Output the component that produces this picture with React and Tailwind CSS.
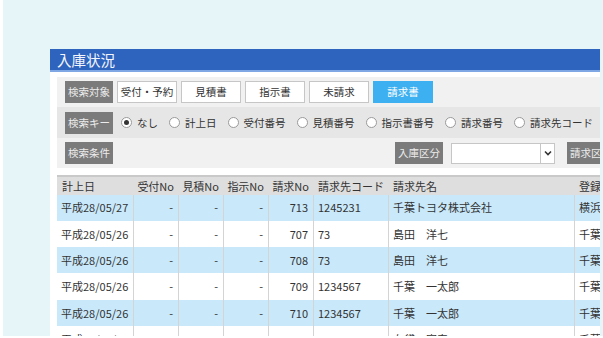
import React from "react";

const BUTTONS = ["受付・予約", "見積書", "指示書", "未請求", "請求書"];

const KEYS = ["なし", "計上日", "受付番号", "見積番号", "指示書番号", "請求番号", "請求先コード"];

const ROWS = [
  ["平成28/05/27", "713", "1245231", "千葉トヨタ株式会社", "横浜本店"],
  ["平成28/05/26", "707", "73", "島田　洋七", "千葉本店"],
  ["平成28/05/26", "708", "73", "島田　洋七", "千葉本店"],
  ["平成28/05/26", "709", "1234567", "千葉　一太郎", "千葉本店"],
  ["平成28/05/26", "710", "1234567", "千葉　一太郎", "千葉本店"],
  ["平成28/05/26", "711", "48", "布袋　寅泰", "千葉本店"],
];

const COLS = "grid grid-cols-[77px_45px_45px_45px_45px_75px_186px_90px]";

/* UI helpers */

const Label = ({ children }) => (
  <div className="h-[22px] w-[48px] shrink-0 bg-[#7b7b7b] text-[#ececec] text-[10.5px] flex items-center justify-center whitespace-nowrap">
    {children}
  </div>
);

const Radio = ({ label, checked }) => (
  <div className="flex items-center gap-[5px] mr-[11px] shrink-0">
    <span className="w-[11px] h-[11px] rounded-full border border-[#9a9a9a] bg-white flex items-center justify-center">
      {checked && <span className="w-[5px] h-[5px] rounded-full bg-[#333]" />}
    </span>
    <span className="text-[10.5px] text-[#333] whitespace-nowrap">{label}</span>
  </div>
);

const Cell = ({ children, right, border = true }) => (
  <div
    className={`h-[26.3px] flex items-center px-[4px] whitespace-nowrap overflow-hidden ${
      right ? "justify-end pr-[5px]" : ""
    } ${border ? "border-r border-[#d4d4d4]" : ""}`}
  >
    {children}
  </div>
);

export default function App() {
  return (
    <div className="w-[603px] h-[338px] bg-white overflow-hidden font-['Noto_Sans_CJK_JP',sans-serif]">
      <div className="ml-[3px] h-[336px] bg-[#e6f5f7] pt-[49px] pl-[47px] pr-[3px] overflow-hidden">
        <div className="w-[550px] h-full bg-white overflow-hidden">
          {/* ================= TITLE ================= */}
          <div className="h-[23px] bg-[#2e63be] border-b-2 border-[#7ea7e4] text-[#f4f6fb] text-[14.5px] pl-[7px] flex items-center">
            入庫状況
          </div>

          <div className="pl-[7px] pt-[5px] w-[600px]">
            {/* ================= SEARCH ================= */}
            <div className="bg-[#f1f1f1]">
              <div className="h-[30px] flex items-center pl-[8px]">
                <Label>検索対象</Label>
                <div className="flex gap-[4px] ml-[4px]">
                  {BUTTONS.map((b, i) => (
                    <div
                      key={b}
                      className={`h-[22px] w-[60px] flex items-center justify-center text-[10.5px] ${
                        i === 4
                          ? "bg-[#3db0f1] text-white border border-[#3db0f1]"
                          : "bg-white text-[#333] border border-[#c6c6c6]"
                      }`}
                    >
                      {b}
                    </div>
                  ))}
                </div>
              </div>

              <div className="h-[31px] flex items-center pl-[8px] bg-[#e6e6e6]">
                <Label>検索キー</Label>
                <div className="flex items-center ml-[8px]">
                  {KEYS.map((k, i) => (
                    <Radio key={k} label={k} checked={i === 0} />
                  ))}
                </div>
              </div>

              <div className="h-[30px] flex items-center pl-[8px]">
                <Label>検索条件</Label>
                <div className="ml-[282px]">
                  <Label>入庫区分</Label>
                </div>
                <div className="ml-[8px] h-[21px] w-[104px] bg-white border border-[#c6c6c6] flex justify-end">
                  <div className="w-[14px] border-l border-[#c6c6c6] flex items-center justify-center">
                    <svg width="8" height="6" viewBox="0 0 8 6">
                      <path d="M1 1.5 L4 4.5 L7 1.5" fill="none" stroke="#333" strokeWidth="1.6" />
                    </svg>
                  </div>
                </div>
                <div className="ml-[12px]">
                  <Label>請求区分</Label>
                </div>
              </div>
            </div>

            {/* ================= TABLE ================= */}
            <div className="mt-[7px] text-[11px] text-[#333]">
              <div className={`${COLS} h-[19.5px] bg-[#dedede] border-t-2 border-[#c9c9c9] items-center`}>
                <div className="px-[5px]">計上日</div>
                <div className="text-right pr-[5px]">受付No</div>
                <div className="text-right pr-[5px]">見積No</div>
                <div className="text-right pr-[5px]">指示No</div>
                <div className="text-right pr-[5px]">請求No</div>
                <div className="px-[4px] whitespace-nowrap">請求先コード</div>
                <div className="px-[4px]">請求先名</div>
                <div className="px-[4px] whitespace-nowrap">登録店舗</div>
              </div>

              {ROWS.map((r, i) => (
                <div key={i} className={`${COLS} ${i % 2 === 0 ? "bg-[#c9e9fb]" : "bg-white"}`}>
                  <Cell>{r[0]}</Cell>
                  <Cell right>-</Cell>
                  <Cell right>-</Cell>
                  <Cell right>-</Cell>
                  <Cell right>{r[1]}</Cell>
                  <Cell>{r[2]}</Cell>
                  <Cell>{r[3]}</Cell>
                  <Cell border={false}>{r[4]}</Cell>
                </div>
              ))}
            </div>
          </div>
        </div>
      </div>
    </div>
  );
}
